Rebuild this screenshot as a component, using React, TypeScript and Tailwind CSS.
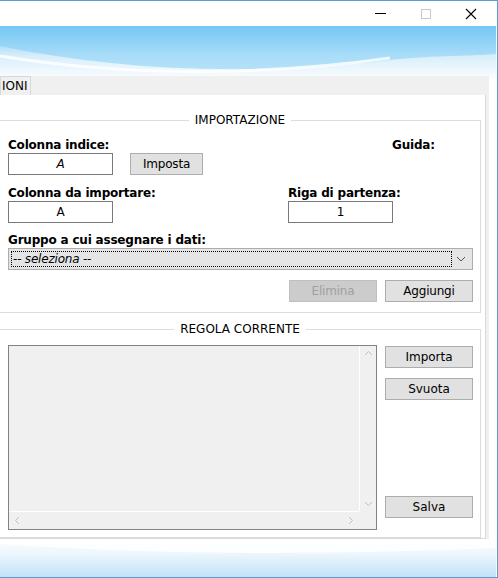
import React from "react";

const font = { fontFamily: "Tahoma, 'DejaVu Sans', 'Liberation Sans', sans-serif" };

function Btn({ children, disabled, className = "" }: { children: React.ReactNode; disabled?: boolean; className?: string }) {
  return (
    <div className={`h-[22px] w-[88px] flex items-center justify-center border text-[12px] ${disabled ? "bg-[#cccccc] border-[#bfbfbf] text-[#a0a0a0]" : "bg-[#e1e1e1] border-[#adadad] text-black"} ${className}`}>
      {children}
    </div>
  );
}

function Legend({ children }: { children: React.ReactNode }) {
  return (
    <div className="absolute -top-[8px] left-0 right-0 flex justify-center">
      <span className="bg-white px-[6px] text-[12px] leading-[15px] text-black">{children}</span>
    </div>
  );
}

export default function App() {
  return (
    <div style={font} className="w-[498px] h-[578px] bg-white overflow-hidden flex flex-col border-t border-r border-b border-[#5b9fcf]">
      <div className="h-[25px] bg-white flex items-center justify-end shrink-0">
        <div className="w-[45px] flex justify-center"><div className="w-[11px] h-px bg-black" /></div>
        <div className="w-[45px] flex justify-center"><div className="w-[10px] h-[10px] border border-[#c8c8c8]" /></div>
        <div className="w-[45px] flex justify-center mr-[4px]">
          <svg width="12" height="12" viewBox="0 0 12 12"><path d="M1 1L11 11M11 1L1 11" stroke="#000" strokeWidth="1.1" /></svg>
        </div>
      </div>
      <div className="relative flex-1 flex flex-col">
        <svg className="absolute inset-0" width="496" height="552" viewBox="0 0 496 552" preserveAspectRatio="none">
          <defs>
            <linearGradient id="g1" x1="0" y1="0" x2="0" y2="1">
              <stop offset="0" stopColor="#6ec4f4" />
              <stop offset="0.55" stopColor="#d8eefb" />
              <stop offset="1" stopColor="#ffffff" />
            </linearGradient>
            <linearGradient id="g2" x1="0" y1="1" x2="0" y2="0">
              <stop offset="0" stopColor="#bfe1f6" />
              <stop offset="0.6" stopColor="#eef7fd" />
              <stop offset="1" stopColor="#ffffff" />
            </linearGradient>
          </defs>
          <rect x="0" y="0" width="496" height="55" fill="url(#g1)" />
          <path d="M0 20 C120 45 250 50 390 34 C420 30 470 30 496 28 L496 0 L0 0Z" fill="#7ccbf6" opacity="0.5" />
          <path d="M0 30 C150 55 300 45 390 32" stroke="#ffffff" strokeWidth="3" fill="none" opacity="0.8" />
          <rect x="0" y="510" width="496" height="42" fill="url(#g2)" />
          <path d="M0 518 C150 528 300 530 496 522 L496 510 L0 510Z" fill="#ffffff" opacity="0.8" />
        </svg>
        <div className="relative h-[50px] shrink-0" />
        <div className="relative h-[19px] bg-[#f0f0f0] w-[489px] flex items-end shrink-0">
          <div className="h-[19px] px-[1px] border border-b-0 border-[#d9d9d9] bg-[#f0f0f0] text-[12px] leading-[18px] pr-[2px]">IONI</div>
        </div>
        <div className="relative w-[489px] h-[444px] bg-[#f0f0f0] pr-[3px] shrink-0">
          <div className="w-[486px] h-[444px] bg-white border border-l-0 border-t-0 border-[#d9d9d9] pt-[25px]">
            <div className="relative w-[481px] h-[193px] border border-l-0 border-[#dcdcdc]">
              <Legend>IMPORTAZIONE</Legend>
              <div className="pl-[8px] pt-[17px] text-[12px] tracking-[-0.2px]">
                <div className="flex">
                  <div className="w-[384px] font-bold leading-[14px]">Colonna indice:</div>
                  <div className="font-bold leading-[14px]">Guida:</div>
                </div>
                <div className="flex items-center gap-[17px] mt-[1px]">
                  <div className="w-[105px] h-[22px] border border-[#7a7a7a] flex items-center justify-center italic">A</div>
                  <div className="h-[22px] w-[73px] flex items-center justify-center border bg-[#e1e1e1] border-[#adadad]">Imposta</div>
                </div>
                <div className="flex mt-[11px]">
                  <div className="w-[280px]">
                    <div className="font-bold leading-[14px]">Colonna da importare:</div>
                    <div className="w-[105px] h-[22px] mt-[1px] border border-[#7a7a7a] flex items-center justify-center">A</div>
                  </div>
                  <div>
                    <div className="font-bold leading-[14px]">Riga di partenza:</div>
                    <div className="w-[105px] h-[22px] mt-[1px] border border-[#7a7a7a] flex items-center justify-center">1</div>
                  </div>
                </div>
                <div className="font-bold leading-[14px] mt-[10px]">Gruppo a cui assegnare i dati:</div>
                <div className="w-[465px] h-[22px] mt-[1px] border border-[#adadad] bg-[#e5e5e5] flex items-center p-[2px]">
                  <div className="flex-1 h-full border border-dotted border-black italic leading-[15px] pl-[1px]">-- seleziona --</div>
                  <svg width="16" height="16" viewBox="0 0 16 16" className="mx-[1px]"><path d="M4 6l4 4 4-4" stroke="#555" fill="none" strokeWidth="1" /></svg>
                </div>
                <div className="flex gap-[8px] mt-[10px] pl-[281px]">
                  <Btn disabled>Elimina</Btn>
                  <Btn>Aggiungi</Btn>
                </div>
              </div>
            </div>
            <div className="relative w-[481px] h-[209px] mt-[16px] border border-l-0 border-[#dcdcdc] pt-[15px] pl-[8px] flex gap-[8px]">
              <Legend>REGOLA CORRENTE</Legend>
              <div className="w-[369px] h-[185px] border border-[#828282] bg-[#f0f0f0] relative">
                <div className="absolute right-0 top-0 w-[17px] h-[165px] border-l border-white flex flex-col justify-between items-center py-[4px]">
                  <svg width="9" height="6" viewBox="0 0 9 6"><path d="M1 5l3.5-3.5L8 5" stroke="#c0c0c0" fill="none" /></svg>
                  <svg width="9" height="6" viewBox="0 0 9 6"><path d="M1 1l3.5 3.5L8 1" stroke="#c0c0c0" fill="none" /></svg>
                </div>
                <div className="absolute left-0 bottom-0 w-[350px] h-[18px] border-t border-white flex justify-between items-center px-[5px]">
                  <svg width="6" height="9" viewBox="0 0 6 9"><path d="M5 1L1.5 4.5 5 8" stroke="#c0c0c0" fill="none" /></svg>
                  <svg width="6" height="9" viewBox="0 0 6 9"><path d="M1 1l3.5 3.5L1 8" stroke="#c0c0c0" fill="none" /></svg>
                </div>
              </div>
              <div className="flex flex-col text-[12px] pt-[1px]">
                <Btn>Importa</Btn>
                <Btn className="mt-[10px]">Svuota</Btn>
                <Btn className="mt-[96px]">Salva</Btn>
              </div>
            </div>
          </div>
        </div>
      </div>
    </div>
  );
}
